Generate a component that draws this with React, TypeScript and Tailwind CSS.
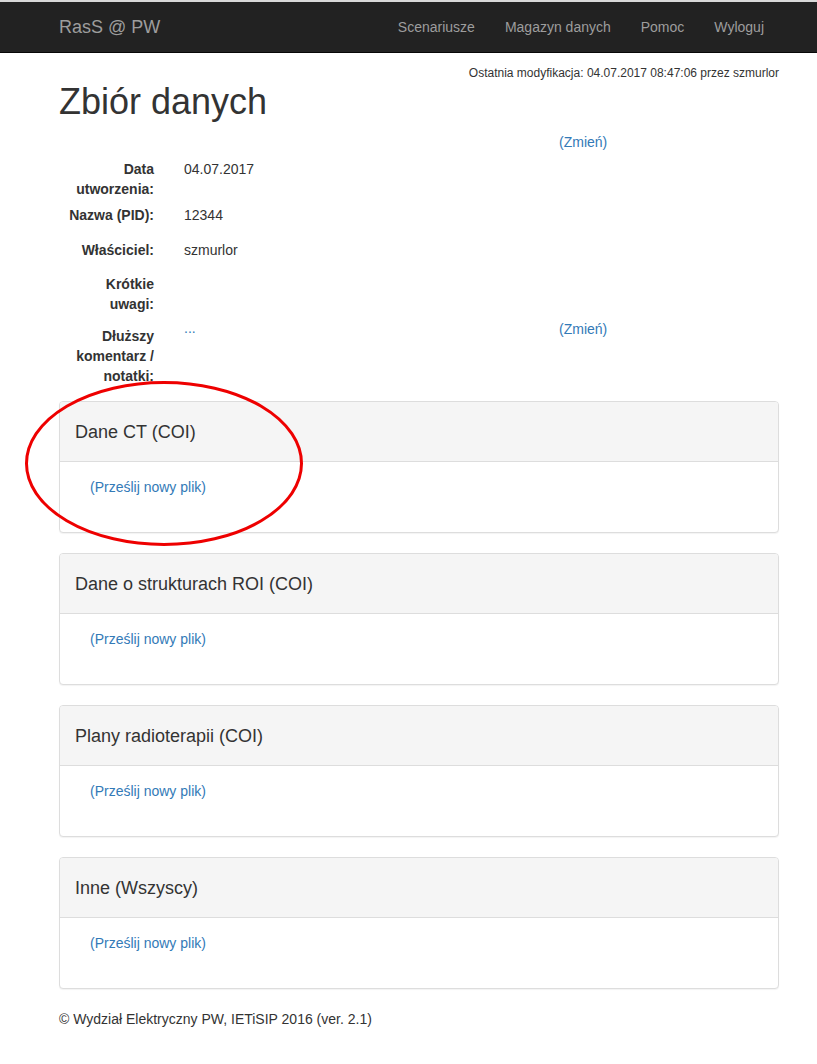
import React from 'react';

const font = { fontFamily: '"Liberation Sans", Arial, sans-serif' };

const navLinks = ['Scenariusze', 'Magazyn danych', 'Pomoc', 'Wyloguj'];

const panels = ['Dane CT (COI)', 'Dane o strukturach ROI (COI)', 'Plany radioterapii (COI)', 'Inne (Wszyscy)'];

function Row({ label, children, extra, className }: { label: string; children?: React.ReactNode; extra?: React.ReactNode; className?: string }) {
  return (
    <div className={`flex items-start ${className ?? ''}`}>
      <div className="w-[95px] shrink-0 text-right font-bold">{label}</div>
      <div className="ml-[30px] w-[375px] shrink-0">{children}</div>
      {extra}
    </div>
  );
}

function Panel({ title }: { title: string }) {
  return (
    <div className="mb-[20px] rounded-[4px] border border-[#dddddd] bg-white shadow-[0_1px_1px_rgba(0,0,0,0.05)]">
      <div className="flex h-[60px] items-center rounded-t-[3px] border-b border-[#dddddd] bg-[#f5f5f5] px-[15px] text-[18px] text-[#333]">
        {title}
      </div>
      <div className="h-[70px] pl-[30px] pt-[15px]">
        <a className="text-[#337ab7]">(Prześlij nowy plik)</a>
      </div>
    </div>
  );
}

export default function App() {
  return (
    <div className="relative min-h-[1064px] bg-white text-[14px] leading-[20px] text-[#333]" style={font}>
      <div className="h-[2px] bg-[#d8d8d8]" />
      <nav className="h-[51px] border-b border-[#080808] bg-[#222222]">
        <div className="ml-[59px] flex h-[50px] w-[720px] items-center justify-between">
          <span className="text-[18px] text-[#9d9d9d]">RasS @ PW</span>
          <div className="flex">
            {navLinks.map((l) => (
              <a key={l} className="px-[15px] text-[#9d9d9d]">
                {l}
              </a>
            ))}
          </div>
        </div>
      </nav>

      <div className="ml-[59px] w-[720px]">
        <div className="mt-[13px] text-right text-[12px] leading-[14px]">
          Ostatnia modyfikacja: 04.07.2017 08:47:06 przez szmurlor
        </div>
        <h1 className="mt-[2px] text-[36px] leading-[40px]">Zbiór danych</h1>

        <div className="mt-[10px] pl-[500px]">
          <a className="text-[#337ab7]">(Zmień)</a>
        </div>

        <Row label="Data utworzenia:" className="mt-[7px]">04.07.2017</Row>
        <Row label="Nazwa (PID):" className="mt-[6px]">12344</Row>
        <Row label="Właściciel:" className="mt-[15px]">szmurlor</Row>
        <Row label="Krótkie uwagi:" className="mt-[14px]" />
        <Row
          label="Dłuższy komentarz / notatki:"
          className="mt-[12px]"
          extra={<a className="-mt-[7px] text-[#337ab7]">(Zmień)</a>}
        >
          <a className="block leading-[4px] text-[#337ab7]">...</a>
        </Row>

        <div className="mt-[15px]">
          {panels.map((p) => (
            <Panel key={p} title={p} />
          ))}
        </div>

        <footer className="mt-[1px] mb-[20px]">© Wydział Elektryczny PW, IETiSIP 2016 (ver. 2.1)</footer>
      </div>

      {/* red annotation ellipse */}
      <svg className="pointer-events-none absolute left-[24px] top-[380px]" width="280" height="167" viewBox="0 0 280 167">
        <ellipse cx="140" cy="83.5" rx="137.5" ry="81" fill="none" stroke="#ee0000" strokeWidth="3" />
      </svg>
    </div>
  );
}
